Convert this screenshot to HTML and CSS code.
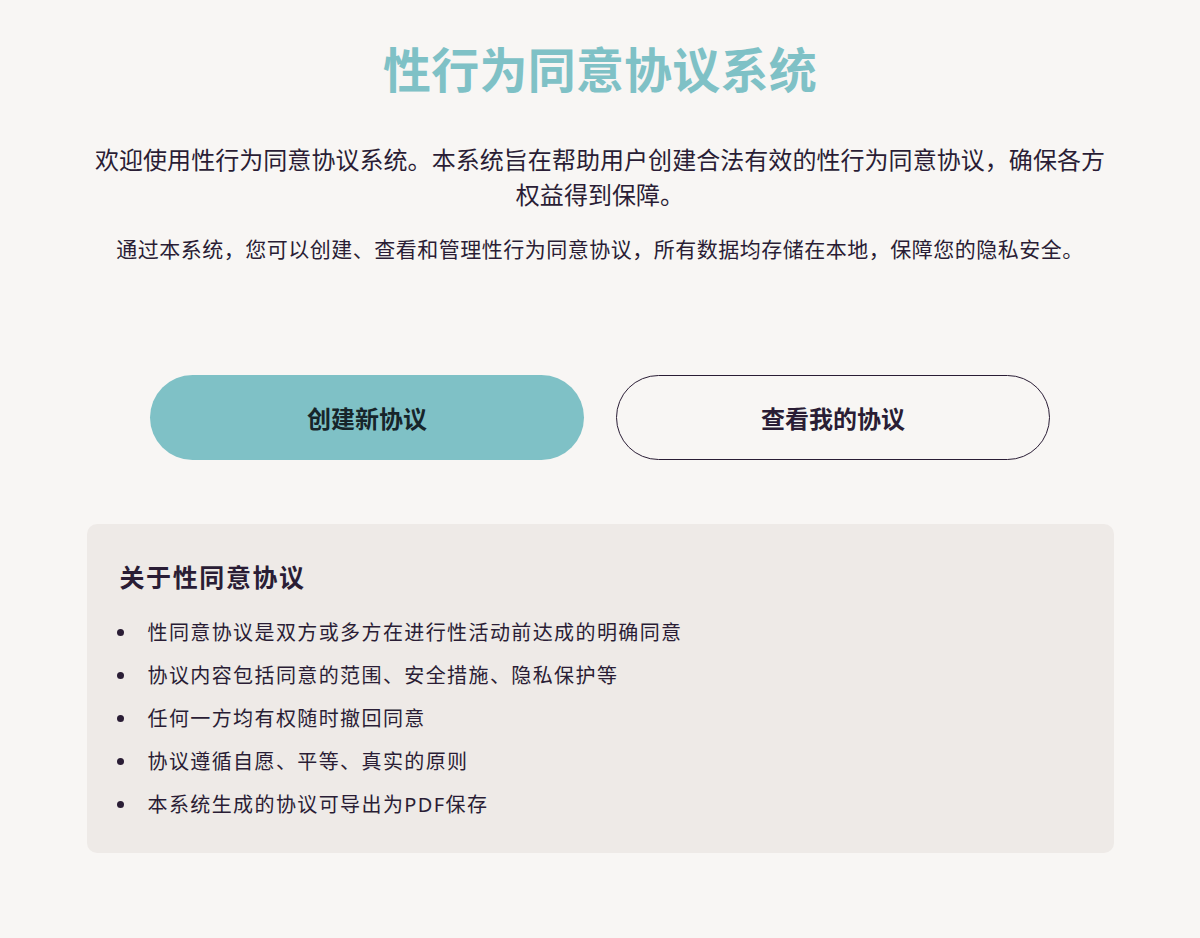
FILE: index.html
```html
<!DOCTYPE html>
<html lang="zh-CN">
<head>
<meta charset="utf-8">
<title>性行为同意协议系统</title>
<link rel="stylesheet" href="styles.css">
</head>
<body>
<main class="page">
  <h1 class="title">性行为同意协议系统</h1>
  <p class="intro">欢迎使用性行为同意协议系统。本系统旨在帮助用户创建合法有效的性行为同意协议，确保各方权益得到保障。</p>
  <p class="note">通过本系统，您可以创建、查看和管理性行为同意协议，所有数据均存储在本地，保障您的隐私安全。</p>
  <div class="actions">
    <button class="btn btn-primary">创建新协议</button>
    <button class="btn btn-outline">查看我的协议</button>
  </div>
  <section class="card">
    <h2 class="card-title">关于性同意协议</h2>
    <ul class="card-list">
      <li>性同意协议是双方或多方在进行性活动前达成的明确同意</li>
      <li>协议内容包括同意的范围、安全措施、隐私保护等</li>
      <li>任何一方均有权随时撤回同意</li>
      <li>协议遵循自愿、平等、真实的原则</li>
      <li>本系统生成的协议可导出为PDF保存</li>
    </ul>
  </section>
</main>
</body>
</html>
```

FILE: styles.css
```css
* { box-sizing: border-box; }
html, body {
  margin: 0;
  padding: 0;
  background: #f8f6f4;
}
body {
  font-family: "Noto Sans", "Noto Sans CJK SC", sans-serif;
  color: #2a1d35;
}
.page {
  width: 1027px;
  margin: 0 auto;
  padding-top: 41px;
  display: flex;
  flex-direction: column;
  align-items: center;
}
.title {
  margin: 0;
  font-size: 48px;
  line-height: 58px;
  font-weight: 700;
  color: #7fc1c6;
  letter-spacing: 0.2px;
}
.intro {
  margin: 43px 0 0;
  font-size: 24px;
  line-height: 35px;
  letter-spacing: 0.05px;
  text-align: center;
}
.note {
  margin: 21px 0 0;
  font-size: 21px;
  line-height: 32px;
  letter-spacing: 0.5px;
  text-align: center;
}
.actions {
  margin-top: 110px;
  width: 900px;
  display: grid;
  grid-template-columns: 1fr 1fr;
  gap: 32px;
}
.btn {
  height: 85px;
  border-radius: 43px;
  font-family: inherit;
  font-size: 24px;
  font-weight: 700;
  cursor: pointer;
}
.btn-primary {
  background: #7fc1c6;
  border: none;
  color: #17252a;
}
.btn-outline {
  background: transparent;
  border: 1.5px solid #2a1d35;
  color: #2a1d35;
}
.card {
  margin-top: 64px;
  width: 100%;
  background: #eeeae7;
  border-radius: 10px;
  padding: 35px 33px 27px;
}
.card-title {
  margin: 0;
  font-size: 25px;
  line-height: 36px;
  font-weight: 700;
  letter-spacing: 1.6px;
}
.card-list {
  margin: 16px 0 0;
  padding-left: 18px;
  font-size: 20px;
  line-height: 43px;
  letter-spacing: 1.4px;
}
.card-list li {
  padding-left: 10px;
}
```
